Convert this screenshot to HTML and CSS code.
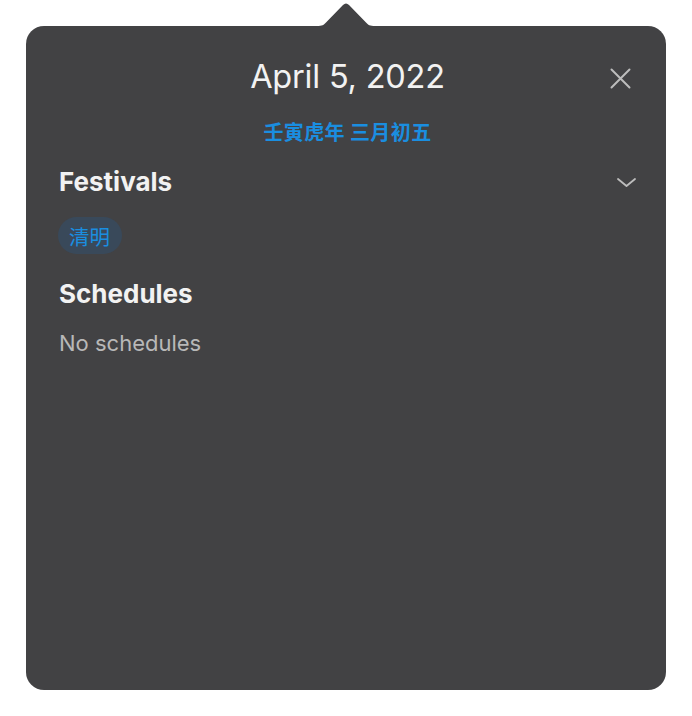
FILE: index.html
```html
<!DOCTYPE html>
<html lang="en">
<head>
<meta charset="utf-8">
<title>April 5, 2022</title>
<link rel="stylesheet" href="styles.css">
</head>
<body>
<div class="popover">
  <svg class="arrow" width="58" height="26" viewBox="0 0 58 26" aria-hidden="true">
    <path d="M0 26 L0 25 C5 25 7 24 9 21.5 L26 4 Q29 1 32 4 L49 21.5 C51 24 53 25 58 25 L58 26 Z" fill="#424244"/>
  </svg>
  <header class="head">
    <span></span>
    <h1 class="title">April 5, 2022</h1>
    <button class="close" aria-label="Close">
      <svg width="21" height="21" viewBox="0 0 21 21"><path d="M1.5 1.5 L19.5 19.5 M19.5 1.5 L1.5 19.5" stroke="#bdbdbd" stroke-width="2" stroke-linecap="round" fill="none"/></svg>
    </button>
  </header>
  <div class="lunar">壬寅虎年 三月初五</div>
  <section class="section">
    <div class="sec-head">
      <h2 class="sec-title">Festivals</h2>
      <svg class="chev" width="19" height="9" viewBox="0 0 19 9"><path d="M1 1 L9.5 8 L18 1" stroke="#bdbdbd" stroke-width="1.8" stroke-linecap="round" stroke-linejoin="round" fill="none"/></svg>
    </div>
    <div class="chips"><span class="chip">清明</span></div>
  </section>
  <section class="section sched">
    <h2 class="sec-title">Schedules</h2>
    <p class="empty">No schedules</p>
  </section>
</div>
</body>
</html>
```
FILE: styles.css
```css
* { box-sizing: border-box; }
html, body { margin: 0; padding: 0; background: #ffffff; }
body {
  font-family: Inter, "Noto Sans CJK SC", "Noto Sans", sans-serif;
  padding: 26px 0 0 26px;
}
.popover {
  position: relative;
  width: 640px;
  height: 664px;
  background: #424244;
  border-radius: 18px;
  padding: 31px 30px 0 33px;
  color: #f2f2f2;
}
.arrow {
  position: absolute;
  top: -25px;
  left: 291px;
  display: block;
}
.head {
  display: grid;
  grid-template-columns: 1fr auto 1fr;
  align-items: center;
}
.title {
  margin: 0;
  font-weight: 400;
  font-size: 32.5px;
  line-height: 40px;
  letter-spacing: -0.2px;
  color: #f2f2f2;
  text-align: center;
}
.close {
  justify-self: end;
  margin-right: 5px;
  margin-top: 3px;
  padding: 0;
  border: 0;
  background: none;
  width: 21px;
  height: 21px;
  display: block;
}
.close svg { display: block; }
.lunar {
  margin-top: 23px;
  text-align: center;
  font-family: "Noto Sans CJK SC", sans-serif;
  font-weight: 700;
  font-size: 20px;
  line-height: 24px;
  letter-spacing: 0.4px;
  color: #1a8ee0;
}
.section { margin-top: 24px; }
.sec-head {
  display: flex;
  align-items: center;
  justify-content: space-between;
}
.sec-title {
  margin: 0;
  font-weight: 700;
  font-size: 26px;
  line-height: 28px;
  color: #f2f2f2;
}
.chev { display: block; }
.chips { margin-top: 21px; display: flex; }
.chip {
  margin-left: -1px;
  height: 37px;
  padding: 0 12px 0 11px;
  border-radius: 19px;
  background: #39495a;
  display: flex;
  align-items: center;
  font-family: "Noto Sans CJK SC", sans-serif;
  font-size: 20.5px;
  color: #1a8ee0;
}
.sched { margin-top: 26px; }
.empty {
  margin: 23px 0 0;
  font-size: 22px;
  line-height: 24px;
  color: #b8b8b8;
}
```
